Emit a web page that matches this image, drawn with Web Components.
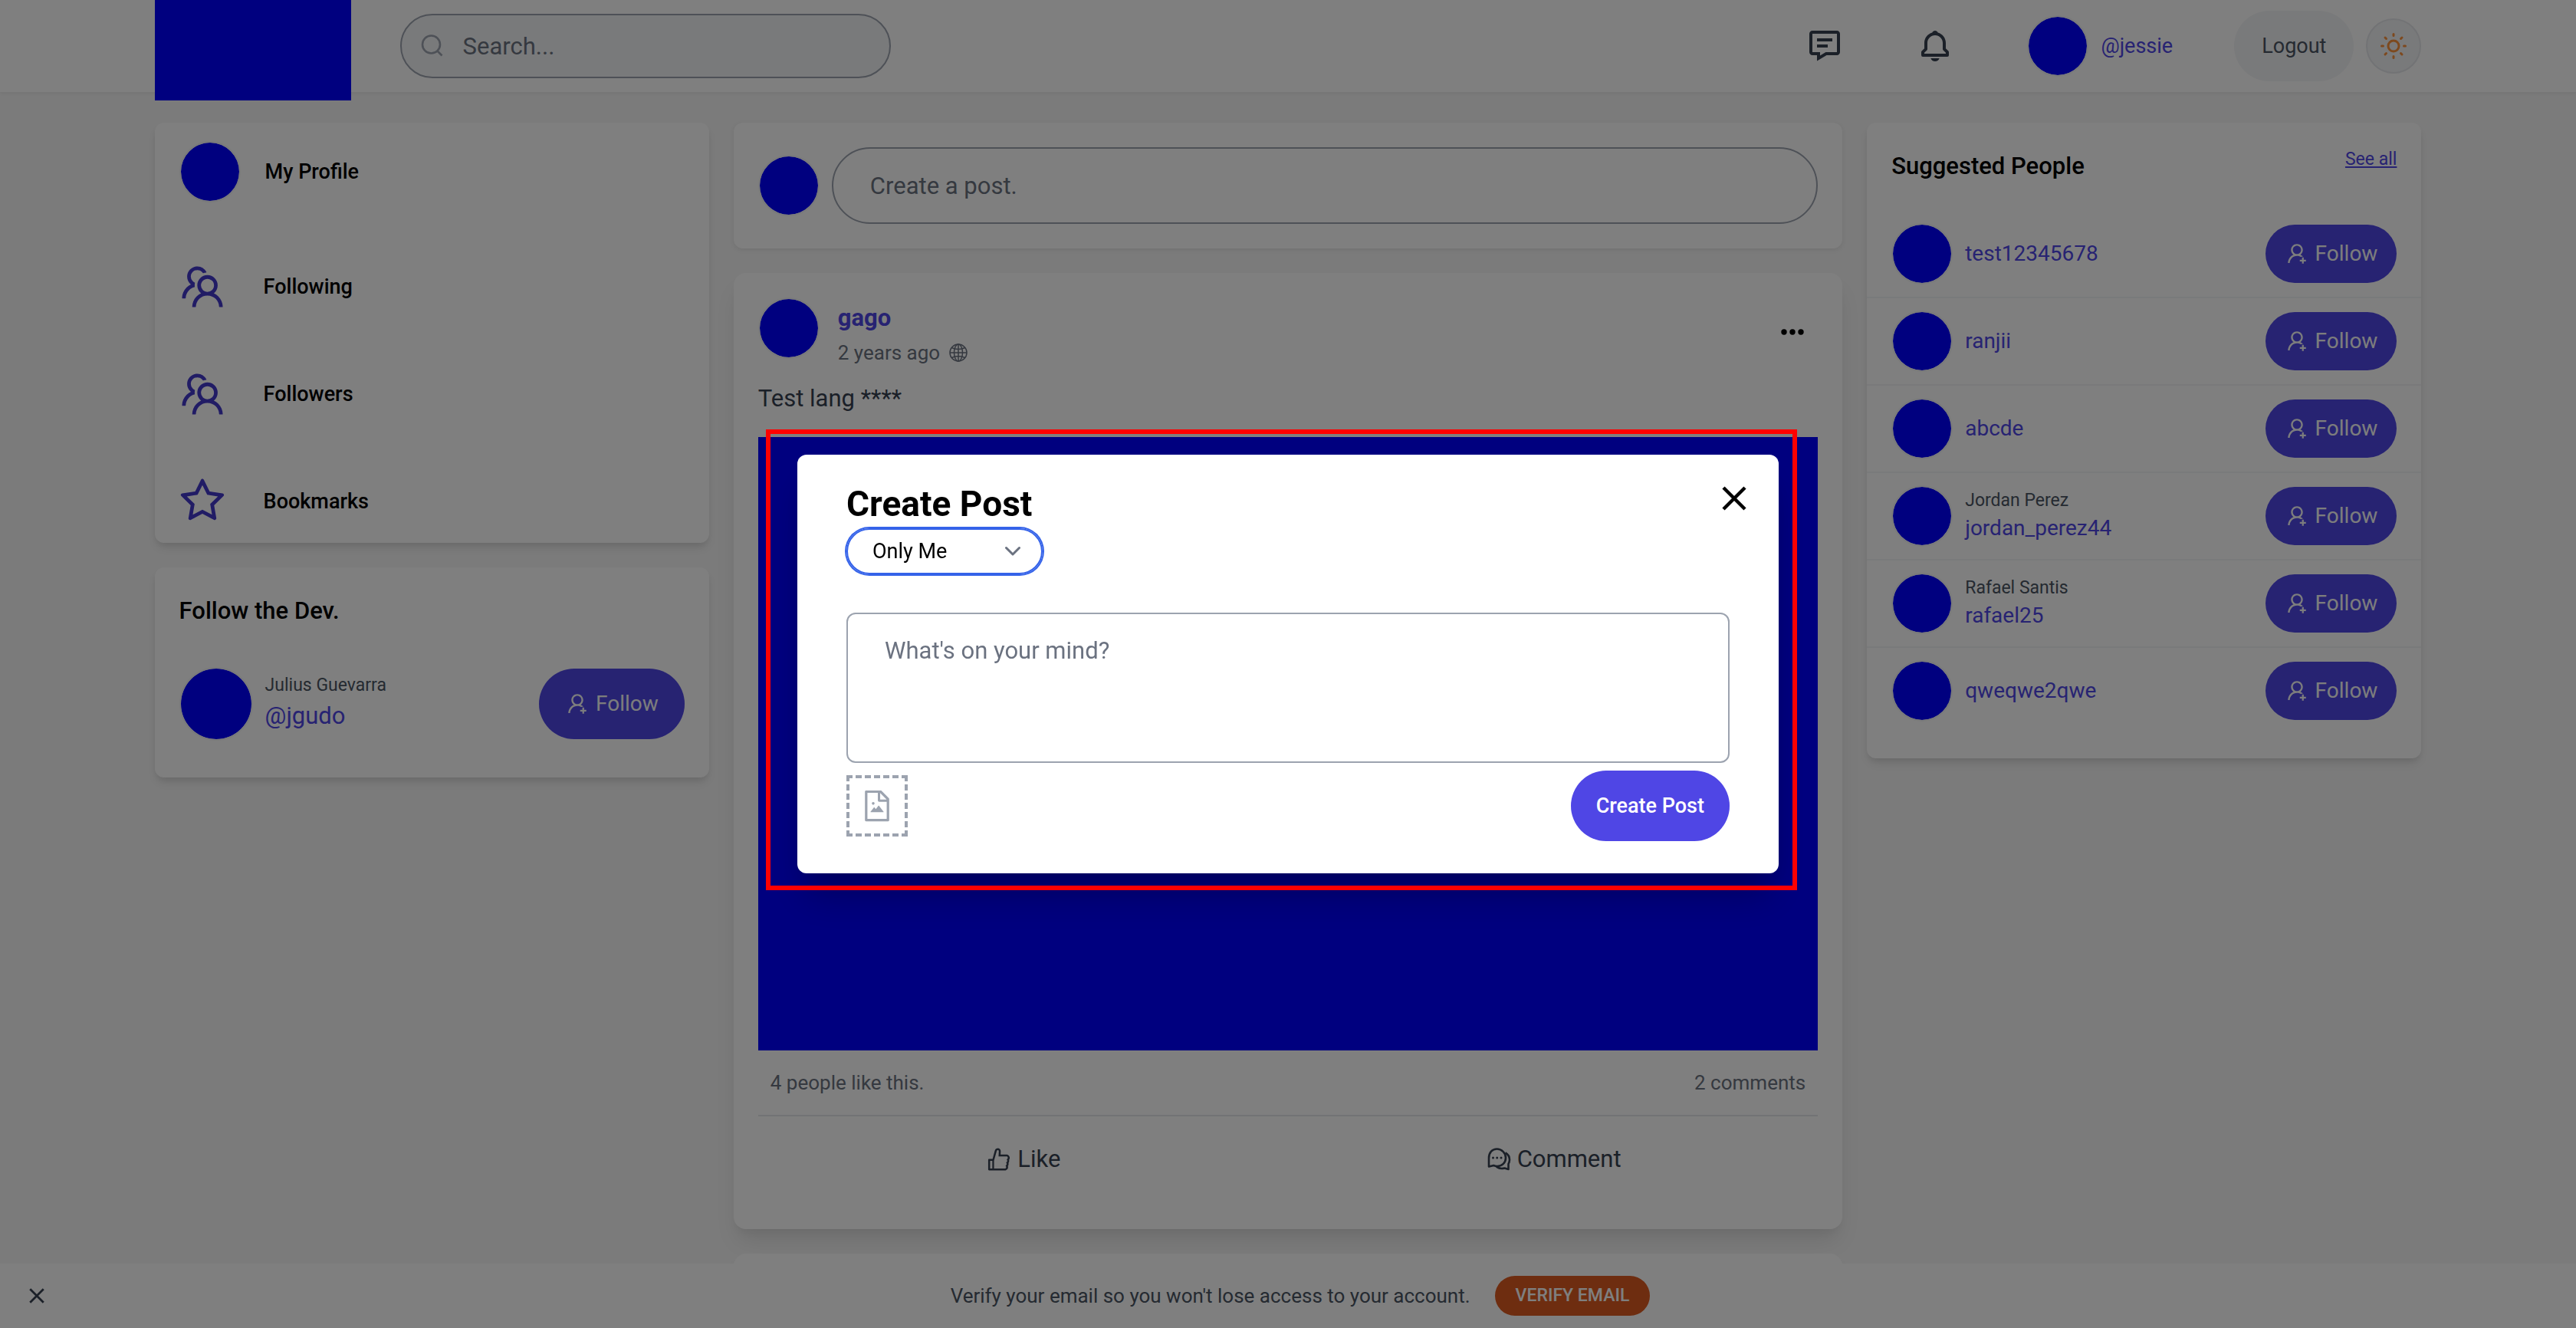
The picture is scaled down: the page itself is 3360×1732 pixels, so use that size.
<!DOCTYPE html>
<html lang="en">
<head>
<meta charset="utf-8">
<title>Feed</title>
<style>
  :root {
    --accent: #4f46e5;
    --accent-deep: #4338ca;
    --surface: #ffffff;
    --page: #f6f6f6;
    --soft: #f3f4f6;
    --line: #e5e7eb;
    --field-line: #9ca3af;
    --muted: #6b7280;
    --text: #4b5563;
    --strong: #374151;
    --title: 46px;
    --large: 31px;
    --medium: 28px;
    --base: 27px;
    --meta: 26px;
    --small: 23px;
  }
  html, body { height: 100%; }
  body {
    margin: 0;
    overflow: hidden;
    background: var(--page);
    color: #000;
    font: 400 27px/40px Roboto, "Liberation Sans", sans-serif;
  }
</style>
</head>
<body>
<feed-app></feed-app>
<script>
const ICONS = {
  search: ['0 0 32 32', '<g fill="none" stroke="currentColor" stroke-width="2.600"><circle cx="14.500" cy="14" r="11.500"/><path d="M22.500 22.500l6 6"/></g>'],
  message: ['0 0 24 24', '<path d="M20 2H4c-1.103 0-2 .897-2 2v12c0 1.103.897 2 2 2h3v3.767L13.277 18H20c1.103 0 2-.897 2-2V4c0-1.103-.897-2-2-2zm0 14h-7.277L9 18.233V16H4V4h16v12z"/><path d="M7 7h10v2H7zm0 4h7v2H7z"/>'],
  bell: ['0 0 24 24', '<path d="M19 13.586V10c0-3.217-2.185-5.927-5.145-6.742C13.562 2.52 12.846 2 12 2s-1.562.52-1.855 1.258C7.184 4.073 5 6.783 5 10v3.586l-1.707 1.707A.996.996 0 0 0 3 16v2a1 1 0 0 0 1 1h16a1 1 0 0 0 1-1v-2a.996.996 0 0 0-.293-.707L19 13.586zM19 17H5v-.586l1.707-1.707A.996.996 0 0 0 7 14v-4c0-2.757 2.243-5 5-5s5 2.243 5 5v4c0 .266.105.52.293.707L19 16.414V17zM12 22a2.98 2.98 0 0 0 2.818-2H9.182A2.98 2.98 0 0 0 12 22z"/>'],
  sun: ['0 0 36 36', '<circle cx="18" cy="18" r="7" fill="none" stroke="currentColor" stroke-width="3"/><g stroke="currentColor" stroke-width="3" stroke-linecap="round"><path d="M18 2.5v2M18 31.500v2M2.500 18h2M31.500 18h2M7 7l1.500 1.500M27.500 27.500l1.500 1.500M7 29l1.500-1.500M27.500 8.500L29 7"/></g>'],
  team: ['0 0 1024 1024', '<path d="M824.2 699.9a301.55 301.55 0 0 0-86.4-60.4C783.1 602.8 812 546.8 812 484c0-110.8-92.4-201.7-203.2-200-109.1 1.7-197 90.6-197 200 0 62.8 29 118.8 74.2 155.5a300.95 300.95 0 0 0-86.4 60.4C345 754.6 314 826.8 312 903.8a8 8 0 0 0 8 8.2h56c4.3 0 7.9-3.4 8-7.7 1.9-58 25.4-112.3 66.7-153.5A226.62 226.62 0 0 1 612 684c60.9 0 118.2 23.7 161.3 66.8C814.6 792 838 846.3 840 904.3c.1 4.3 3.7 7.700 8 7.700h56a8 8 0 0 0 8-8.200c-2-77-33-149.200-87.800-203.900zM612 612c-34.200 0-66.400-13.300-90.500-37.500a126.860 126.860 0 0 1-37.500-91.800c.3-32.800 13.400-64.500 36.300-88 24-24.600 56.100-38.300 90.400-38.700 33.900-.3 66.800 12.900 91 36.600 24.800 24.300 38.400 56.800 38.400 91.400 0 34.200-13.300 66.300-37.500 90.500A127.300 127.300 0 0 1 612 612zM361.500 510.400c-.9-8.700-1.400-17.500-1.400-26.400 0-15.900 1.500-31.400 4.300-46.500.7-3.600-1.200-7.300-4.500-8.800-13.600-6.100-26.100-14.500-36.900-25.100a127.540 127.540 0 0 1-38.700-95.400c.9-32.100 13.800-62.600 36.300-85.600 24.700-25.300 57.900-39.100 93.200-38.700 31.900.3 62.700 12.600 86 34.400 7.900 7.400 14.700 15.600 20.400 24.400 2 3.100 5.900 4.400 9.300 3.200 17.600-6.100 36.200-10.400 55.300-12.400 5.600-.6 8.800-6.600 6.300-11.600-32.500-64.300-98.900-108.700-175.700-109.900-110.900-1.700-203.300 89.200-203.300 199.900 0 62.800 28.900 118.800 74.200 155.500-31.800 14.700-61.100 35-86.500 60.400-54.800 54.700-85.800 126.900-87.800 204a8 8 0 0 0 8 8.200h56.100c4.300 0 7.900-3.400 8-7.700 1.900-58 25.400-112.300 66.700-153.500 29.400-29.400 65.400-49.800 104.700-59.700 3.900-1 6.500-4.700 6-8.700z"/>'],
  star: ['0 0 1024 1024', '<path d="M908.1 353.1l-253.9-36.9L540.7 86.1c-3.1-6.3-8.2-11.4-14.5-14.5-15.8-7.8-35-1.3-42.9 14.5L369.8 316.2l-253.9 36.9c-7 1-13.4 4.3-18.3 9.3a32.05 32.05 0 0 0 .6 45.3l183.7 179.1-43.4 252.9a31.95 31.95 0 0 0 46.4 33.7L512 754l227.1 119.4c6.2 3.3 13.4 4.4 20.3 3.2 17.4-3 29.1-19.5 26.1-36.9l-43.4-252.9 183.7-179.1c5-4.9 8.3-11.3 9.3-18.3 2.7-17.5-9.5-33.7-27-36.3zM664.8 561.6l36.1 210.3L512 672.7 323.1 772l36.1-210.3-152.8-149L417.6 382 512 190.7 606.4 382l211.2 30.7-152.8 148.9z"/>'],
  userAdd: ['0 0 1024 1024', '<path d="M678.3 642.4c24.2-13 51.9-20.4 81.4-20.4h.1c3 0 4.4-3.6 2.2-5.6a371.67 371.67 0 0 0-103.7-65.8c-.4-.2-.8-.3-1.2-.5C719.2 505 759.6 431.7 759.6 349c0-137-110.8-248-247.5-248S264.7 212 264.7 349c0 82.7 40.4 156 102.6 201.1-.4.2-.8.3-1.2.5-44.7 18.9-84.8 46-119.3 80.6a373.42 373.42 0 0 0-80.4 119.5A373.6 373.6 0 0 0 137 888.8a8 8 0 0 0 8 8.2h59.9c4.3 0 7.9-3.5 8-7.8 2-77.2 32.9-149.5 87.6-204.3C357 628.2 432.2 597 512.2 597c56.7 0 111.1 15.7 158 45.1a8.1 8.1 0 0 0 8.1.3zM512.2 521c-45.8 0-88.900-17.900-121.400-50.400A171.200 171.200 0 0 1 340.500 349c0-45.900 17.900-89.100 50.300-121.600S466.300 177 512.200 177s88.900 17.900 121.400 50.400A171.200 171.200 0 0 1 683.900 349c0 45.900-17.900 89.100-50.300 121.600C601.100 503.100 558 521 512.200 521zM880 759h-84v-84c0-4.400-3.600-8-8-8h-56c-4.400 0-8 3.600-8 8v84h-84c-4.400 0-8 3.600-8 8v56c0 4.400 3.600 8 8 8h84v84c0 4.400 3.600 8 8 8h56c4.400 0 8-3.600 8-8v-84h84c4.400 0 8-3.600 8-8v-56c0-4.400-3.600-8-8-8z"/>'],
  image: ['0 0 1024 1024', '<path d="M553.1 509.1l-77.8 99.2-41.1-52.4a8 8 0 0 0-12.6 0l-99.8 127.2a7.98 7.98 0 0 0 6.3 12.9H696c6.7 0 10.4-7.7 6.3-12.9l-136.5-174a8.1 8.1 0 0 0-12.7 0zM360 442a40 40 0 1 0 80 0 40 40 0 1 0-80 0zM854.6 288.6L639.4 73.4c-6-6-14.1-9.4-22.6-9.4H192c-17.7 0-32 14.3-32 32v832c0 17.7 14.3 32 32 32h640c17.7 0 32-14.3 32-32V311.3c0-8.5-3.4-16.700-9.400-22.700zM790.200 326H602V137.800L790.200 326zm1.800 562H232V136h302v216a42 42 0 0 0 42 42h216v494z"/>'],
  like: ['0 0 1024 1024', '<path d="M885.9 533.7c16.8-22.2 26.1-49.4 26.1-77.7 0-44.900-25.100-87.400-65.500-111.100a67.670 67.670 0 0 0-34.300-9.300H572.400l6-122.900c1.400-29.700-9.100-57.900-29.500-79.400A106.620 106.620 0 0 0 471 99.900c-52 0-98 35-111.800 85.100l-85.900 311H144c-17.700 0-32 14.300-32 32v364c0 17.700 14.300 32 32 32h601.300c9.200 0 18.200-1.800 26.500-5.400 47.600-20.300 78.300-66.800 78.300-118.400 0-12.600-1.800-25-5.400-37 16.800-22.200 26.100-49.400 26.100-77.700 0-12.600-1.800-25-5.400-37 16.800-22.200 26.100-49.400 26.100-77.700-.2-12.600-2-25.100-5.600-37.100zM184 852V568h81v284h-81zm636.400-353l-21.900 19 13.900 25.400a56.200 56.200 0 0 1 6.900 27.300c0 16.500-7.200 32.200-19.600 43l-21.900 19 13.900 25.400a56.200 56.200 0 0 1 6.900 27.300c0 16.500-7.200 32.200-19.600 43l-21.900 19 13.900 25.400a56.200 56.200 0 0 1 6.900 27.300c0 22.400-13.200 42.600-33.600 51.800H329V564.800l99.500-360.500a44.100 44.100 0 0 1 42.200-32.300c7.600 0 15.100 2.200 21.100 6.700 9.900 7.400 15.200 18.600 14.600 30.500l-9.600 198.400h314.400C829 418.500 840 436.900 840 456c0 16.500-7.200 32.100-19.600 43z"/>'],
  comment: ['0 0 36 36', '<g fill="none" stroke="currentColor" stroke-width="2.600" stroke-linejoin="round"><path d="M5 27.500V16.500C5 9 9.500 4.500 15.500 4.500S27 9.500 27 16s-4.800 11-11 11c-1.800 0-3.300-.3-4.800-1L5 27.500z"/><path d="M26.500 9.500c3.500 2 5.500 5.200 5.500 9 0 2.200-.7 4-1.500 5.500v7l-5-1.500c-4 1-8 .5-11-2.500"/></g><circle cx="10.500" cy="16" r="1.500"/><circle cx="15.700" cy="16" r="1.500"/><circle cx="21" cy="16" r="1.500"/>'],
  globe: ['0 0 24 24', '<g fill="none" stroke="currentColor" stroke-width="1.500"><circle cx="12" cy="12" r="11"/><ellipse cx="12" cy="12" rx="5.500" ry="11"/><path d="M12 1v22M1 12h22M3.500 5.500c5 2.600 12 2.600 17 0M3.500 18.500c5-2.600 12-2.600 17 0"/></g>'],
  dots: ['0 0 30 30', '<circle cx="4" cy="15" r="3.700"/><circle cx="15" cy="15" r="3.700"/><circle cx="26" cy="15" r="3.700"/>'],
  chevron: ['0 0 20 20', '<path d="M1.500 5.500L10 14l8.500-8.500" fill="none" stroke="currentColor" stroke-width="3" stroke-linecap="round" stroke-linejoin="round"/>'],
  close: ['0 0 32 32', '<path d="M2 2l28 28M30 2L2 30" fill="none" stroke="currentColor" stroke-width="4.500"/>']
};

const RESET = `
  *, *::before, *::after { box-sizing: border-box; }
  button, input, select, textarea { font: inherit; color: inherit; margin: 0; padding: 0; border: 0; background: none; outline: none; }
  a { color: inherit; text-decoration: none; }
  h1, h2, p, ul { margin: 0; padding: 0; font-weight: 500; }
`;

function define(name, css, render) {
  customElements.define(name, class extends HTMLElement {
    connectedCallback() {
      if (this.shadowRoot) return;
      const template = document.createElement('template');
      template.innerHTML = `<style>${RESET}${css}</style>${render(this)}`;
      this.attachShadow({ mode: 'open' }).append(template.content.cloneNode(true));
    }
  });
}

define('app-icon', `
  :host { display: inline-flex; flex: none; width: 32px; height: 32px; }
  svg { width: 100%; height: 100%; fill: currentColor; display: block; }
`, el => { const [box, body] = ICONS[el.getAttribute('name')]; return `<svg viewBox="${box}" aria-hidden="true">${body}</svg>`; });

define('user-avatar', `
  :host { display: block; flex: none; width: 80px; height: 80px; border-radius: 50%; border: 2px solid #f3f4f6; background: #0000ff; background-clip: padding-box; box-sizing: border-box; }
  :host([large]) { width: 96px; height: 96px; }
`, () => '');

define('follow-button', `
  :host { display: block; flex: none; }
  button { display: flex; align-items: center; gap: 8px; height: 76px; padding: 0 25px; border-radius: 46px; background: var(--accent); color: #f9fafb; font-size: var(--medium); }
  :host([large]) button { height: 92px; padding: 0 34px; }
`, () => `<button type="button"><app-icon name="userAdd"></app-icon>Follow</button>`);

define('app-card', `
  :host { display: block; border-radius: 12px; background: var(--surface); box-shadow: 0 8px 12px -2px rgba(0,0,0,.1), 0 4px 8px -2px rgba(0,0,0,.06); }
  :host([flat]) { box-shadow: 0 2px 6px rgba(0,0,0,.08); }
  :host([raised]) { border-radius: 16px; box-shadow: 0 20px 30px -6px rgba(0,0,0,.1), 0 8px 12px -4px rgba(0,0,0,.05); }
`, () => `<slot></slot>`);

define('site-header', `
  :host { display: flex; align-items: center; height: 120px; padding: 0 6%; background: var(--surface); box-shadow: 0 2px 4px rgba(0,0,0,.05); position: relative; }
  .logo { flex: none; align-self: flex-start; width: 256px; height: 131px; background: #0000ff; }
  .search { display: flex; align-items: center; gap: 24px; width: 640px; height: 84px; margin-left: 64px; padding: 0 24px; border: 2px solid var(--field-line); border-radius: 42px; background: var(--soft); color: var(--field-line); }
  input { flex: 1; min-width: 0; height: 100%; font-size: var(--large); color: var(--strong); }
  input::placeholder { color: var(--muted); opacity: 1; }
  nav { margin-left: auto; display: flex; align-items: center; gap: 96px; color: var(--strong); }
  nav button { display: flex; }
  nav app-icon { width: 48px; height: 48px; }
  .me { display: flex; align-items: center; gap: 16px; color: var(--accent); font-size: var(--base); }
  .logout { height: 92px; margin-left: 80px; padding: 0 36px; border-radius: 46px; background: var(--soft); color: var(--text); }
  .theme { display: flex; align-items: center; justify-content: center; width: 72px; height: 72px; margin-left: 16px; border-radius: 50%; border: 2px solid var(--line); background: var(--soft); color: #fb923c; }
  .theme app-icon { width: 36px; height: 36px; }
`, () => `
  <a class="logo" href="#" aria-label="Home"></a>
  <label class="search"><app-icon name="search"></app-icon><input type="text" placeholder="Search..." aria-label="Search"></label>
  <nav>
    <button type="button" aria-label="Messages"><app-icon name="message"></app-icon></button>
    <button type="button" aria-label="Notifications"><app-icon name="bell"></app-icon></button>
    <a class="me" href="#"><user-avatar></user-avatar>@jessie</a>
  </nav>
  <button class="logout" type="button">Logout</button>
  <button class="theme" type="button" aria-label="Toggle theme"><app-icon name="sun"></app-icon></button>`);

define('side-menu', `
  :host { display: flex; flex-direction: column; gap: 32px; }
  a { display: flex; align-items: center; gap: 46px; height: 108px; padding: 0 28px; font-weight: 500; }
  a.me { height: 128px; gap: 32px; padding: 0 32px; }
  app-icon { width: 68px; height: 68px; color: var(--accent-deep); }
`, () => `
  <a class="me" href="#"><user-avatar></user-avatar>My Profile</a>
  <a href="#"><app-icon name="team"></app-icon>Following</a>
  <a href="#"><app-icon name="team"></app-icon>Followers</a>
  <a href="#"><app-icon name="star"></app-icon>Bookmarks</a>`);

define('person-row', `
  :host { display: flex; align-items: center; gap: 16px; padding: 16px 32px; border-bottom: 2px solid var(--soft); }
  :host(:last-of-type) { border-bottom: 0; }
  :host([large]) { padding: 0; }
  .who { flex: 1; min-width: 0; }
  .name { font-size: var(--small); line-height: 32px; font-weight: 400; color: var(--text); }
  .handle { display: block; font-size: var(--medium); line-height: 40px; color: var(--accent); }
  :host([large]) .handle { font-size: var(--large); line-height: 48px; }
`, el => {
  const size = el.hasAttribute('large') ? 'large' : '';
  const name = el.getAttribute('name');
  return `<user-avatar ${size}></user-avatar>
    <div class="who">${name ? `<p class="name">${name}</p>` : ''}<a class="handle" href="#"><slot></slot></a></div>
    <follow-button ${size}></follow-button>`;
});

define('dev-panel', `
  :host { display: block; padding: 32px 32px 48px; }
  h2 { font-size: var(--large); line-height: 50px; margin-bottom: 48px; }
`, () => `<h2>Follow the Dev.</h2><person-row large name="Julius Guevarra">@jgudo</person-row>`);

define('suggested-people', `
  :host { display: block; padding-bottom: 32px; }
  header { display: flex; justify-content: space-between; align-items: flex-start; height: 115px; padding: 32px 32px 0; }
  h2 { font-size: var(--large); line-height: 50px; }
  header a { font-size: var(--small); line-height: 32px; color: var(--accent); text-decoration: underline; }
`, () => `
  <header><h2>Suggested People</h2><a href="#">See all</a></header>
  <person-row>test12345678</person-row>
  <person-row>ranjii</person-row>
  <person-row>abcde</person-row>
  <person-row name="Jordan Perez">jordan_perez44</person-row>
  <person-row name="Rafael Santis">rafael25</person-row>
  <person-row>qweqwe2qwe</person-row>`);

define('post-prompt', `
  :host { display: flex; align-items: center; gap: 16px; padding: 32px; }
  input { flex: 1; min-width: 0; height: 100px; padding: 0 48px; border: 2px solid var(--field-line); border-radius: 50px; font-size: var(--large); }
  input::placeholder { color: var(--muted); opacity: 1; }
`, () => `<user-avatar></user-avatar><input type="text" placeholder="Create a post." aria-label="Create a post">`);

define('feed-post', `
  :host { display: block; padding: 32px; }
  header { display: flex; align-items: flex-start; gap: 24px; height: 90px; }
  .by { flex: 1; padding-top: 4px; }
  .author { display: block; font-size: var(--large); line-height: 46px; font-weight: 700; color: var(--accent); }
  .meta { display: flex; align-items: center; gap: 12px; font-size: var(--meta); line-height: 44px; font-weight: 400; color: var(--muted); }
  .meta app-icon { width: 24px; height: 24px; }
  .more { display: flex; padding: 30px 18px 0; }
  .more app-icon { width: 30px; height: 30px; }
  .text { font-size: var(--large); line-height: 48px; font-weight: 400; margin: 18px 0 26px; color: var(--strong); }
  .photo { height: 800px; background: #0000ff; }
  .stats { display: flex; justify-content: space-between; height: 86px; padding: 17px 16px 0; font-size: var(--meta); line-height: 50px; color: var(--muted); border-bottom: 2px solid var(--line); }
  .actions { display: grid; grid-template-columns: 1fr 1fr; height: 115px; padding-bottom: 3px; }
  .actions button { display: flex; align-items: center; justify-content: center; gap: 6px; font-size: var(--large); color: var(--strong); }
  .actions app-icon { width: 36px; height: 36px; }
`, () => `
  <header>
    <user-avatar></user-avatar>
    <div class="by"><a class="author" href="#">gago</a><p class="meta">2 years ago<app-icon name="globe"></app-icon></p></div>
    <button class="more" type="button" aria-label="Post options"><app-icon name="dots"></app-icon></button>
  </header>
  <p class="text">Test lang ****</p>
  <div class="photo" role="img" aria-label="Attached photo"></div>
  <div class="stats"><span>4 people like this.</span><span>2 comments</span></div>
  <div class="actions">
    <button type="button"><app-icon name="like"></app-icon>Like</button>
    <button type="button"><app-icon name="comment"></app-icon>Comment</button>
  </div>`);

define('verify-banner', `
  :host { position: fixed; left: 0; right: 0; bottom: 0; display: flex; align-items: center; height: 84px; padding-right: 64px; background: var(--surface); color: var(--text); }
  .dismiss { display: flex; justify-content: center; width: 96px; color: var(--strong); }
  .dismiss app-icon { width: 20px; height: 20px; }
  .body { flex: 1; display: flex; align-items: center; justify-content: center; gap: 32px; font-size: var(--meta); }
  .verify { height: 52px; padding: 0 27px; border-radius: 26px; background: #dc5a20; color: #fff; font-size: var(--small); font-weight: 500; }
`, () => `
  <button class="dismiss" type="button" aria-label="Dismiss"><app-icon name="close"></app-icon></button>
  <div class="body"><span>Verify your email so you won't lose access to your account.</span><button class="verify" type="button">VERIFY EMAIL</button></div>`);

define('create-post-dialog', `
  :host { position: fixed; inset: 0; display: flex; align-items: center; justify-content: center; background: rgba(0,0,0,.5); }
  .dialog { position: relative; width: 1280px; max-width: 90%; padding: 40px 64px 42px; border-radius: 12px; background: #fff; box-shadow: 0 40px 50px -10px rgba(0,0,0,.2), 0 20px 40px -8px rgba(0,0,0,.1); }
  .frame { position: absolute; inset: -33px -24px -22px -41px; border: 6px solid #ff0000; pointer-events: none; }
  h1 { font-size: var(--title); line-height: 48px; font-weight: 700; }
  .close { position: absolute; top: 33px; right: 34px; padding: 8px; display: flex; }
  .privacy { display: grid; width: 256px; height: 60px; margin-top: 8px; align-items: center; }
  .privacy > * { grid-area: 1 / 1; }
  select { appearance: none; width: 100%; height: 60px; padding: 0 32px; border: 2px solid #3563e9; border-radius: 30px; box-shadow: 0 0 0 2px #3563e9; font-size: var(--base); }
  .privacy app-icon { width: 20px; height: 20px; justify-self: end; margin-right: 29px; color: var(--muted); pointer-events: none; }
  textarea { display: block; width: 100%; height: 196px; margin-top: 50px; padding: 24px 48px; border: 2px solid var(--field-line); border-radius: 12px; resize: none; font-size: var(--large); line-height: 48px; }
  textarea::placeholder { color: var(--muted); opacity: 1; }
  footer { display: flex; align-items: center; justify-content: space-between; margin-top: 10px; }
  .attach { display: flex; align-items: center; justify-content: center; width: 80px; height: 80px; border: 4px dashed var(--field-line); color: var(--field-line); }
  .attach app-icon { width: 46px; height: 46px; }
  .submit { height: 92px; padding: 0 33px; border-radius: 46px; background: var(--accent); color: #fff; font-weight: 500; }
`, () => `
  <form class="dialog" role="dialog" aria-label="Create Post">
    <h1>Create Post</h1>
    <div class="privacy">
      <select aria-label="Privacy"><option>Only Me</option><option>Public</option><option>Followers</option></select>
      <app-icon name="chevron"></app-icon>
    </div>
    <textarea placeholder="What's on your mind?" aria-label="Post text"></textarea>
    <footer>
      <button class="attach" type="button" aria-label="Attach image"><app-icon name="image"></app-icon></button>
      <button class="submit" type="button">Create Post</button>
    </footer>
    <button class="close" type="button" aria-label="Close"><app-icon name="close"></app-icon></button>
    <div class="frame"></div>
  </form>`);

define('feed-app', `
  :host { display: block; }
  main { display: grid; grid-template-columns: minmax(0, 1fr) minmax(0, 2fr) minmax(0, 1fr); gap: 32px; align-items: start; padding: 40px 6% 0; }
  .column { display: flex; flex-direction: column; gap: 32px; }
`, () => `
  <site-header></site-header>
  <main>
    <div class="column">
      <app-card><side-menu></side-menu></app-card>
      <app-card><dev-panel></dev-panel></app-card>
    </div>
    <div class="column">
      <app-card flat><post-prompt></post-prompt></app-card>
      <app-card raised><feed-post></feed-post></app-card>
      <app-card raised><post-prompt></post-prompt></app-card>
    </div>
    <app-card><suggested-people></suggested-people></app-card>
  </main>
  <verify-banner></verify-banner>
  <create-post-dialog></create-post-dialog>`);
</script>
</body>
</html>
